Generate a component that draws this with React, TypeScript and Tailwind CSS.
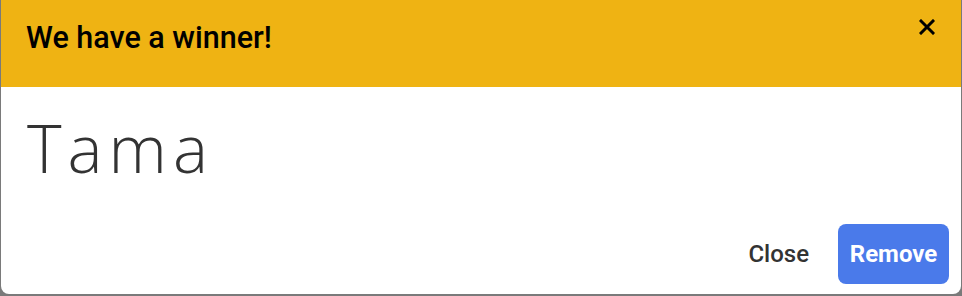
import React from "react";

export default function App() {
  return (
    <div className="w-[962px] h-[296px] bg-[#7a7a7a] pl-px pr-px overflow-hidden" style={{ fontFamily: "Roboto, 'Liberation Sans', sans-serif" }}>
      <div className="w-full h-[294px] bg-white rounded-b-[8px] flex flex-col overflow-hidden">
        <div className="h-[87px] bg-[#efb313] flex items-start justify-between pl-[25px] pr-[26px]">
          <h1 className="mt-[20px] text-[30.5px] leading-[36px] font-medium text-black">We have a winner!</h1>
          <svg className="mt-[19px]" width="16" height="16" viewBox="0 0 16 16">
            <path d="M2 2 L14 14 M14 2 L2 14" stroke="#000" strokeWidth="3" strokeLinecap="square" />
          </svg>
        </div>
        <div className="flex-1 flex flex-col">
          <div className="pl-[26px] pt-[17px] text-[66px] leading-[86px] font-light text-[#333] tracking-[6px]" style={{ fontFamily: "'Open Sans', Lato, sans-serif" }}>
            Tama
          </div>
          <div className="flex-1" />
          <div className="flex items-center justify-end gap-[29px] pr-[12px] pb-[10px]">
            <button className="text-[24px] font-medium text-[#333]">Close</button>
            <button className="w-[111px] h-[60px] rounded-[8px] bg-[#4a7aea] text-white text-[24px] font-bold">Remove</button>
          </div>
        </div>
      </div>
    </div>
  );
}
